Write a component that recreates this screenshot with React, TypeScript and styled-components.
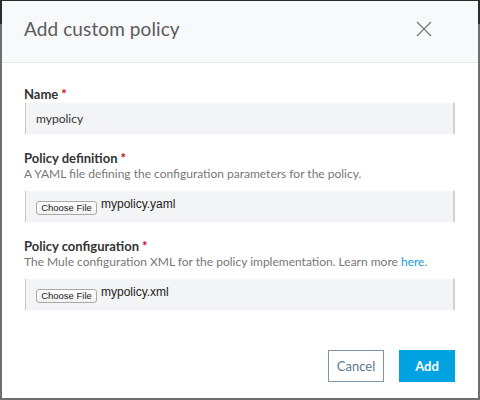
import React from "react";
import styled, { createGlobalStyle } from "styled-components";

const Global = createGlobalStyle`
  html, body { margin: 0; padding: 0; background: #2a2a2a; }
  * { box-sizing: border-box; }
`;

const Frame = styled.div`
  width: 480px;
  height: 400px;
  padding: 1px 2px 2px 2px;
  background: linear-gradient(to bottom, #2b2b2b 0, #2b2b2b 24px, #6f6f6f 24px, #6f6f6f 100%);
`;

const Modal = styled.div`
  height: 100%;
  background: #ffffff;
  display: flex;
  flex-direction: column;
`;

const Header = styled.div`
  height: 62px;
  background: #f7f9fb;
  border-bottom: 1px solid #e3e7eb;
  padding: 16px 22px 0 22px;
  display: flex;
  align-items: flex-start;
  justify-content: space-between;
`;

const Title = styled.h2`
  margin: 0;
  font-family: Lato, "Open Sans", sans-serif;
  font-weight: 400;
  font-size: 19px;
  line-height: 24px;
  color: #5b5b5b;
  letter-spacing: 0.1px;
`;

const CloseButton = styled.button`
  border: none;
  background: transparent;
  padding: 0;
  margin: 4px 24px 0 0;
  width: 16px;
  height: 16px;
  display: flex;
  align-items: center;
  justify-content: center;
  cursor: pointer;
`;

const Body = styled.div`
  padding: 23px 23px 0 23px;
  display: flex;
  flex-direction: column;
`;

const Field = styled.div<{ $gap?: number }>`
  display: flex;
  flex-direction: column;
  margin-top: ${(p) => p.$gap ?? 0}px;
`;

const Label = styled.div`
  font-family: Lato, sans-serif;
  font-weight: 700;
  font-size: 13px;
  line-height: 16px;
  color: #333333;
  margin-left: -1px;
`;

const Required = styled.span`
  color: #d0021b;
  margin-left: 3px;
`;

const Help = styled.div`
  font-family: Lato, sans-serif;
  font-size: 12px;
  line-height: 16px;
  color: #777777;
  margin-left: -1px;
  white-space: nowrap;
`;

const Link = styled.a`
  color: #1d9ad9;
  text-decoration: none;
`;

const Box = styled.div<{ $top: number }>`
  margin-top: ${(p) => p.$top}px;
  height: 31px;
  background: #f3f4f6;
  border-left: 1px solid #c3c6ca;
  border-right: 2px solid #cfd2d6;
  padding-left: 10px;
  display: flex;
  align-items: center;
`;

const TextValue = styled.span`
  font-family: Lato, sans-serif;
  font-size: 12px;
  color: #333333;
`;

const ChooseButton = styled.span`
  height: 14px;
  width: 61px;
  margin-top: 2px;
  border: 1px solid #a9a9a9;
  border-radius: 3px;
  background: linear-gradient(#ffffff, #f1f1f1);
  font-family: "Liberation Sans", Arial, sans-serif;
  font-size: 9.5px;
  line-height: 12px;
  color: #222;
  display: flex;
  align-items: center;
  justify-content: center;
`;

const FileName = styled.span`
  margin-left: 4px;
  margin-bottom: 5px;
  font-family: "Liberation Sans", Arial, sans-serif;
  font-size: 12px;
  line-height: 16px;
  color: #222;
`;

const Footer = styled.div`
  margin-top: auto;
  padding: 0 23px 16px 0;
  display: flex;
  justify-content: flex-end;
  gap: 15px;
`;

const Button = styled.button<{ $primary?: boolean }>`
  width: 56px;
  height: 32px;
  font-family: Lato, sans-serif;
  font-size: 13px;
  font-weight: ${(p) => (p.$primary ? 700 : 400)};
  color: ${(p) => (p.$primary ? "#ffffff" : "#5d7a8d")};
  background: ${(p) => (p.$primary ? "#00a2df" : "#ffffff")};
  border: 1px solid ${(p) => (p.$primary ? "#00a2df" : "#7d95a6")};
  padding: 0;
  cursor: pointer;
`;

const FileInput = ({ name, top }: { name: string; top: number }) => (
  <Box $top={top}>
    <ChooseButton>Choose File</ChooseButton>
    <FileName>{name}</FileName>
  </Box>
);

export default function App() {
  return (
    <>
      <Global />
      <Frame>
        <Modal>
          <Header>
            <Title>Add custom policy</Title>
            <CloseButton aria-label="Close">
              <svg width="16" height="16" viewBox="0 0 16 16">
                <path d="M1 1 L15 15 M15 1 L1 15" stroke="#7b7b7b" strokeWidth="1.3" fill="none" />
              </svg>
            </CloseButton>
          </Header>
          <Body>
            <Field>
              <Label>
                Name<Required>*</Required>
              </Label>
              <Box $top={1}>
                <TextValue>mypolicy</TextValue>
              </Box>
            </Field>
            <Field $gap={16}>
              <Label>
                Policy definition<Required>*</Required>
              </Label>
              <Help>A YAML file defining the configuration parameters for the policy.</Help>
              <FileInput name="mypolicy.yaml" top={9} />
            </Field>
            <Field $gap={16}>
              <Label>
                Policy configuration<Required>*</Required>
              </Label>
              <Help>
                The Mule configuration XML for the policy implementation. Learn more <Link href="#">here</Link>.
              </Help>
              <FileInput name="mypolicy.xml" top={9} />
            </Field>
          </Body>
          <Footer>
            <Button>Cancel</Button>
            <Button $primary>Add</Button>
          </Footer>
        </Modal>
      </Frame>
    </>
  );
}
